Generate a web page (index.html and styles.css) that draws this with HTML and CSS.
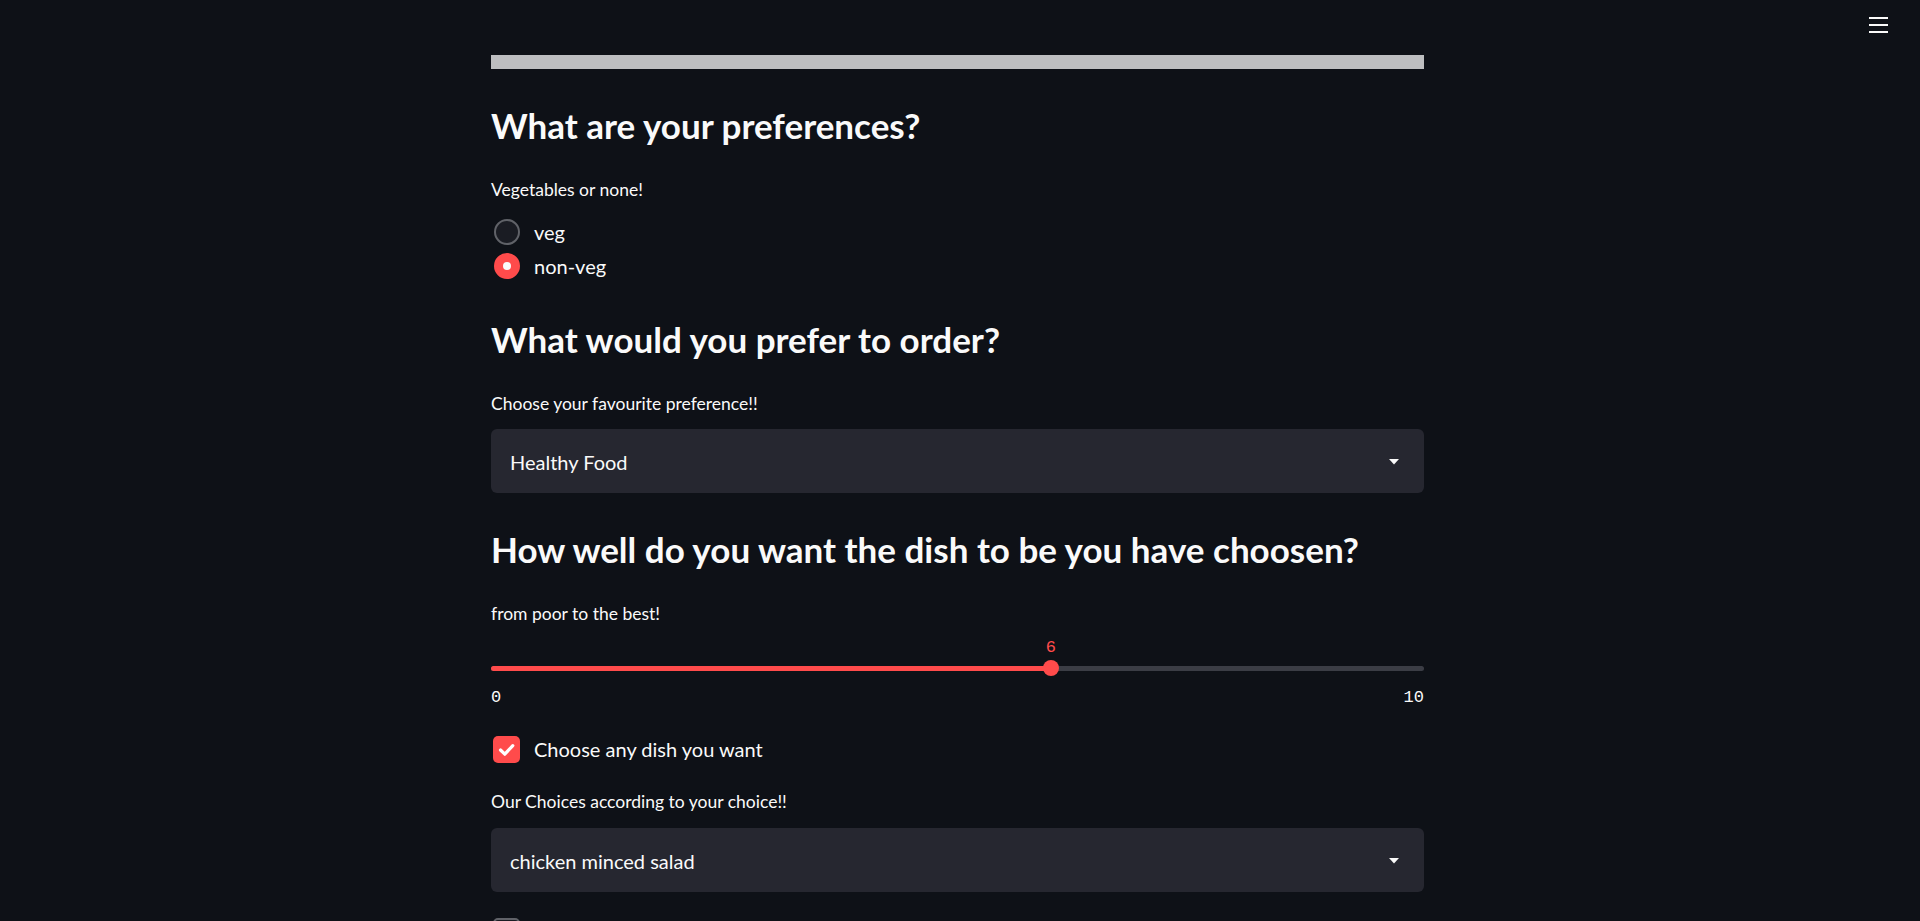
FILE: index.html
```html
<!DOCTYPE html>
<html lang="en">
<head>
<meta charset="utf-8">
<title>Food preferences</title>
<link rel="stylesheet" href="styles.css">
</head>
<body>
<div class="menu-btn" aria-label="menu">
  <span></span><span></span><span></span>
</div>
<main class="block">
  <div class="banner"></div>

  <h3 class="subheader">What are your preferences?</h3>
  <div class="widget-label">Vegetables or none!</div>
  <div class="radio-group">
    <label class="radio-row"><span class="radio"></span><span class="opt-text">veg</span></label>
    <label class="radio-row"><span class="radio checked"><span class="dot"></span></span><span class="opt-text">non-veg</span></label>
  </div>

  <h3 class="subheader">What would you prefer to order?</h3>
  <div class="widget-label">Choose your favourite preference!!</div>
  <div class="select">
    <span class="select-value">Healthy Food</span>
    <svg class="caret" width="10" height="6" viewBox="0 0 10 6"><path d="M0 0 H10 L5 5.5 Z" fill="#fafafa"/></svg>
  </div>

  <h3 class="subheader">How well do you want the dish to be you have choosen?</h3>
  <div class="widget-label">from poor to the best!</div>
  <div class="slider">
    <div class="slider-value-row">
      <span class="slider-value" style="left: 60%">6</span>
    </div>
    <div class="slider-track-row">
      <div class="track"><div class="track-fill" style="width: 60%"></div></div>
      <span class="thumb" style="left: 60%"></span>
    </div>
    <div class="slider-ticks"><span>0</span><span>10</span></div>
  </div>

  <label class="check-row">
    <span class="checkbox checked">
      <svg width="27" height="27" viewBox="0 0 27 27"><path d="M7.5 14 L11.8 18.2 L19.8 9.6" fill="none" stroke="#fff" stroke-width="3.2" stroke-linecap="round" stroke-linejoin="round"/></svg>
    </span>
    <span class="opt-text">Choose any dish you want</span>
  </label>

  <div class="widget-label">Our Choices according to your choice!!</div>
  <div class="select select-second">
    <span class="select-value">chicken minced salad</span>
    <svg class="caret" width="10" height="6" viewBox="0 0 10 6"><path d="M0 0 H10 L5 5.5 Z" fill="#fafafa"/></svg>
  </div>

  <div class="check-row check-row-last">
    <span class="checkbox"></span>
  </div>
</main>
</body>
</html>
```
FILE: styles.css
```css
html, body {
  margin: 0;
  padding: 0;
  height: 921px;
  overflow: hidden;
  background: #0e1117;
}
body {
  font-family: Lato, "Noto Sans", sans-serif;
  color: #fafafa;
  position: relative;
}
.menu-btn {
  position: absolute;
  top: 17px;
  right: 32px;
  width: 19px;
  display: flex;
  flex-direction: column;
  gap: 5px;
}
.menu-btn span {
  display: block;
  height: 2px;
  background: #fafafa;
}
.block {
  width: 933px;
  margin-left: 491px;
  padding-top: 55px;
  display: flex;
  flex-direction: column;
}
.banner {
  height: 14px;
  background: #bdbec0;
}
.subheader {
  margin: 36px 0 0 0;
  font-size: 35px;
  line-height: 40px;
  font-weight: 700;
}
.widget-label {
  margin-top: 34px;
  font-size: 17.5px;
  line-height: 22px;
}
.radio-group {
  margin-top: 14px;
  display: flex;
  flex-direction: column;
}
.radio-row, .check-row {
  height: 34px;
  display: flex;
  align-items: center;
}
.radio {
  width: 22px;
  height: 22px;
  margin-left: 3px;
  border-radius: 50%;
  border: 2px solid #606268;
  background: #1a1c23;
  display: flex;
  align-items: center;
  justify-content: center;
  flex: none;
}
.radio.checked {
  background: #ff4b4b;
  border-color: #ff4b4b;
}
.radio .dot {
  width: 8px;
  height: 8px;
  border-radius: 50%;
  background: #fafafa;
}
.opt-text {
  margin-left: 14px;
  font-size: 20px;
  line-height: 26px;
}
.select {
  margin-top: 14px;
  height: 64px;
  background: #262730;
  border-radius: 6px;
  display: flex;
  align-items: center;
  justify-content: space-between;
  padding: 0 25px 0 19px;
}
.select-second {
  margin-top: 15px;
}
.select-value {
  font-size: 20px;
  line-height: 26px;
  margin-top: 1px;
}
.caret {
  margin-top: 2px;
}
.slider {
  padding-top: 13px;
  display: flex;
  flex-direction: column;
}
.slider-value-row {
  position: relative;
  height: 20px;
}
.slider-value {
  position: absolute;
  top: 0;
  transform: translateX(-50%);
  font-family: "Liberation Mono", "DejaVu Sans Mono", monospace;
  font-size: 17px;
  line-height: 20px;
  color: #ff4b4b;
}
.slider-track-row {
  position: relative;
  margin-top: 2px;
  height: 16px;
  display: flex;
  align-items: center;
}
.track {
  flex: 1;
  height: 5px;
  border-radius: 3px;
  background: #3b3d45;
  overflow: hidden;
}
.track-fill {
  height: 100%;
  background: #ff4b4b;
}
.thumb {
  position: absolute;
  top: 0;
  width: 16px;
  height: 16px;
  margin-left: -8px;
  border-radius: 50%;
  background: #ff4b4b;
}
.slider-ticks {
  margin-top: 12px;
  display: flex;
  justify-content: space-between;
  font-family: "Liberation Mono", "DejaVu Sans Mono", monospace;
  font-size: 17px;
  line-height: 20px;
  color: #fafafa;
}
.check-row {
  margin-top: 24px;
}
.checkbox {
  width: 27px;
  height: 27px;
  margin-left: 2px;
  border-radius: 5px;
  box-sizing: border-box;
  border: 2px solid #606268;
  background: #1a1c23;
  flex: none;
  display: flex;
}
.checkbox.checked {
  border: none;
  background: #ff4b4b;
}
.check-row + .widget-label {
  margin-top: 25px;
}
.check-row-last {
  margin-top: 22px;
}
```
